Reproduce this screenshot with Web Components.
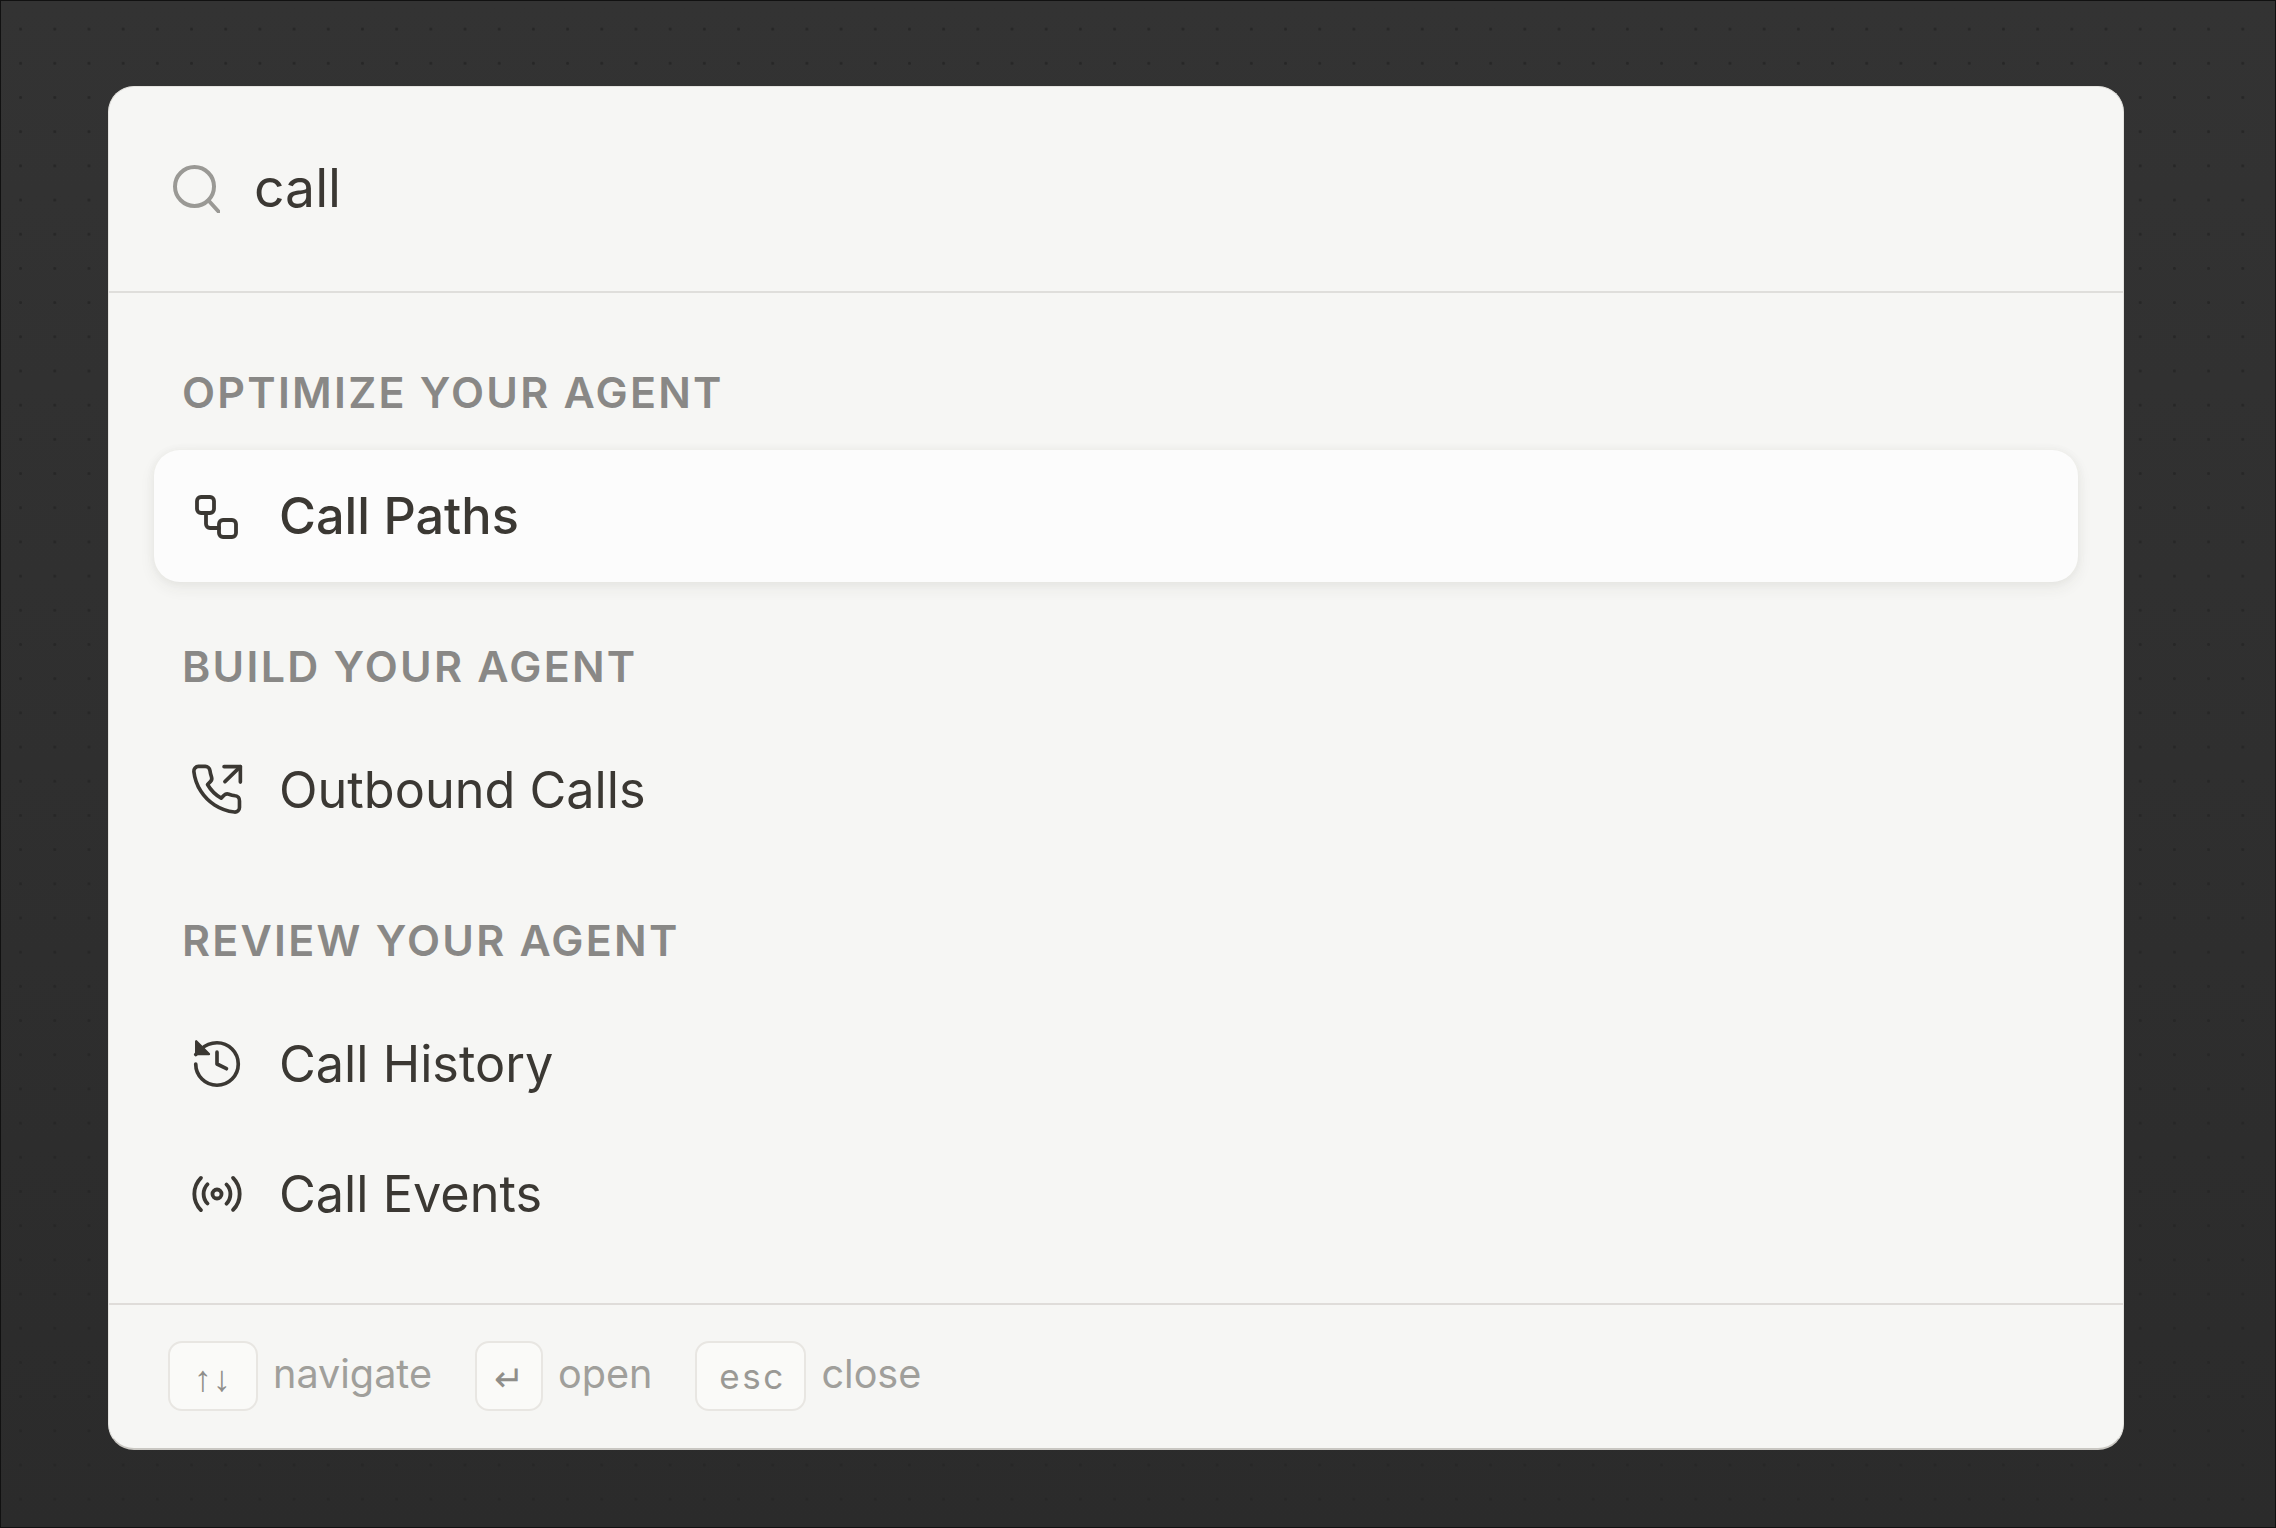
<!DOCTYPE html>
<html lang="en">
<head>
<meta charset="utf-8">
<title>Command palette</title>
<style>
  html, body { margin: 0; padding: 0; background: #2f2f2f; }
</style>
</head>
<body>
<app-backdrop>
  <command-palette>
    <palette-search slot="search" value="call"></palette-search>
    <palette-group label="OPTIMIZE YOUR AGENT">
      <palette-item icon="paths" selected>Call Paths</palette-item>
    </palette-group>
    <palette-group label="BUILD YOUR AGENT">
      <palette-item icon="outbound">Outbound Calls</palette-item>
    </palette-group>
    <palette-group label="REVIEW YOUR AGENT">
      <palette-item icon="history">Call History</palette-item>
      <palette-item icon="events">Call Events</palette-item>
    </palette-group>
    <key-hint slot="footer" keys="↑↓" width="90" small>navigate</key-hint>
    <key-hint slot="footer" keys="↵" width="68" small>open</key-hint>
    <key-hint slot="footer" keys="esc" width="111">close</key-hint>
  </command-palette>
</app-backdrop>

<script>
const FONT = '"Inter", "Liberation Sans", sans-serif';

const ICONS = {
  search: `<svg viewBox="0 0 48 48" width="48" height="48" fill="none" stroke="currentColor" stroke-width="4" stroke-linecap="round"><circle cx="22.5" cy="21.5" r="19.500"/><path d="M36.500 35.500 46.500 46.500"/></svg>`,
  paths: `<svg viewBox="0 0 52 52" width="52" height="52" fill="none" stroke="currentColor" stroke-width="3.800" stroke-linecap="round" stroke-linejoin="round"><rect x="6" y="7" width="17" height="16" rx="4"/><rect x="28" y="30" width="17" height="17" rx="4"/><path d="M15 23v11a4 4 0 0 0 4 4h9"/></svg>`,
  outbound: `<svg viewBox="0.600 0.400 23.600 23.600" width="52" height="52" fill="none" stroke="currentColor" stroke-width="1.650" stroke-linecap="round" stroke-linejoin="round"><path d="M15.600 1.600H23v7"/><path d="M23 1.600 16 8.400"/><path d="M22.600 17.100v3a2.100 2.100 0 0 1-2.300 2.100 20.600 20.600 0 0 1-9-3.200 20.300 20.300 0 0 1-6.200-6.200 20.600 20.600 0 0 1-3.200-9A2.100 2.100 0 0 1 4 1.500h3.100a2.100 2.100 0 0 1 2.100 1.800 13.400 13.400 0 0 0 .7 2.900 2.100 2.100 0 0 1-.5 2.200L8.100 9.700a16.700 16.700 0 0 0 6.200 6.200l1.300-1.300a2.100 2.100 0 0 1 2.200-.5 13.400 13.400 0 0 0 2.900.7 2.100 2.100 0 0 1 1.900 2.300z"/></svg>`,
  history: `<svg viewBox="1 1 22 22" width="52" height="52" fill="none" stroke="currentColor" stroke-width="1.550" stroke-linecap="round" stroke-linejoin="round"><path d="M3 12a9 9 0 1 0 9-9 9.750 9.750 0 0 0-6.740 2.740L3 8"/><path d="M3.200 2.400v5.400h5.400z" fill="currentColor" stroke-width="1"/><path d="M12 7v5l4 2"/></svg>`,
  events: `<svg viewBox="0.500 0.500 23 23" width="52" height="52" fill="none" stroke="currentColor" stroke-width="1.700" stroke-linecap="round" stroke-linejoin="round"><path d="M4.900 19.100C1 15.200 1 8.800 4.900 4.900"/><path d="M7.800 16.200c-2.300-2.300-2.300-6.100 0-8.500"/><circle cx="12" cy="12" r="2"/><path d="M16.200 7.800c2.300 2.300 2.300 6.100 0 8.500"/><path d="M19.100 4.900C23 8.800 23 15.100 19.100 19"/></svg>`
};

class AppBackdrop extends HTMLElement {
  constructor() {
    super();
    this.attachShadow({ mode: 'open' }).innerHTML = `
      <style>
        :host {
          display: flex;
          align-items: flex-start;
          box-sizing: border-box;
          width: 2276px;
          height: 1528px;
          padding: 85px 0 0 107px;
          border: 1px solid #111;
          background-color: #2f2f2f;
          background-image:
            radial-gradient(circle, #272727 1.2px, transparent 1.7px),
            linear-gradient(#333333, #2b2b2b);
          background-size: 34.2px 34.2px, 100% 100%;
          background-position: 2.5px 11px, 0 0;
          font-family: ${FONT};
        }
      </style>
      <slot></slot>
    `;
  }
}

class CommandPalette extends HTMLElement {
  constructor() {
    super();
    this.attachShadow({ mode: 'open' }).innerHTML = `
      <style>
        :host {
          display: flex;
          flex-direction: column;
          box-sizing: border-box;
          width: 2016px;
          background: #f6f6f4;
          border: 1px solid #e4e3df;
          border-bottom: 2px solid #c9c7c2;
          border-radius: 26px;
          overflow: hidden;
        }
        .results {
          display: flex;
          flex-direction: column;
          gap: 58px;
          padding: 72px 45px 44px;
          border-top: 2px solid #dfdedb;
          border-bottom: 2px solid #dfdcd9;
        }
        .footer {
          display: flex;
          gap: 43px;
          padding: 36px 59px 37px;
        }
      </style>
      <slot name="search"></slot>
      <div class="results"><slot></slot></div>
      <div class="footer"><slot name="footer"></slot></div>
    `;
  }
}

class PaletteSearch extends HTMLElement {
  constructor() {
    super();
    this.attachShadow({ mode: 'open' }).innerHTML = `
      <style>
        :host {
          display: flex;
          align-items: center;
          box-sizing: border-box;
          height: 204px;
          padding: 0 0 0 63px;
          gap: 34px;
        }
        .icon { display: flex; color: #9a9995; }
        .value { font-size: 53.500px; font-weight: 400; color: #3b3833; line-height: 1; padding-bottom: 2px; }
      </style>
      <span class="icon">${ICONS.search}</span>
      <span class="value"></span>
    `;
  }

  connectedCallback() {
    this.shadowRoot.querySelector('.value').textContent = this.getAttribute('value');
  }
}

class PaletteGroup extends HTMLElement {
  constructor() {
    super();
    this.attachShadow({ mode: 'open' }).innerHTML = `
      <style>
        :host { display: block; }
        .label {
          padding-left: 28px;
          margin-bottom: 32px;
          font-size: 43px;
          line-height: 54px;
          font-weight: 600;
          letter-spacing: 2.250px;
          color: #898886;
        }
      </style>
      <div class="label"></div>
      <slot></slot>
    `;
  }

  connectedCallback() {
    this.shadowRoot.querySelector('.label').textContent = this.getAttribute('label');
  }
}

class PaletteItem extends HTMLElement {
  constructor() {
    super();
    this.attachShadow({ mode: 'open' }).innerHTML = `
      <style>
        :host {
          display: flex;
          align-items: center;
          gap: 36px;
          height: 130px;
          padding-left: 37px;
          border-radius: 26px;
          font-size: 50.400px;
          font-weight: 420;
          color: #3b3833;
        }
        :host([selected]) {
          height: 132px;
          margin: -1px 0;
          background: #fcfcfc;
          font-weight: 500;
          box-shadow: 0 6px 16px rgba(60, 55, 45, 0.07), 0 0 10px rgba(60, 55, 45, 0.05);
        }
        .icon { display: flex; }
        .text { padding-bottom: 2px; }
      </style>
      <span class="icon"></span>
      <span class="text"><slot></slot></span>
    `;
  }

  connectedCallback() {
    this.shadowRoot.querySelector('.icon').innerHTML = ICONS[this.getAttribute('icon')] || '';
  }
}

class KeyHint extends HTMLElement {
  constructor() {
    super();
    this.attachShadow({ mode: 'open' }).innerHTML = `
      <style>
        :host {
          display: flex;
          align-items: center;
          gap: 15px;
          font-size: 39.600px;
          color: #a09f9b;
        }
        span { padding-bottom: 5px; }
        kbd {
          display: flex;
          align-items: center;
          justify-content: center;
          box-sizing: border-box;
          height: 70px;
          padding-left: 3px;
          background: #fafaf8;
          border: 2px solid #e8e6e2;
          border-radius: 14px;
          font-family: inherit;
          font-size: 35px;
          letter-spacing: 2.500px;
          color: #9a9995;
        }
        :host([small]) kbd {
          font-family: "Liberation Sans", sans-serif;
          font-size: 36px;
          padding: 5px 0 0;
          letter-spacing: 1px;
          color: #8f8e8a;
        }
      </style>
      <kbd></kbd>
      <span><slot></slot></span>
    `;
  }

  connectedCallback() {
    const kbd = this.shadowRoot.querySelector('kbd');
    kbd.textContent = this.getAttribute('keys');
    kbd.style.width = this.getAttribute('width') + 'px';
  }
}

customElements.define('app-backdrop', AppBackdrop);
customElements.define('command-palette', CommandPalette);
customElements.define('palette-search', PaletteSearch);
customElements.define('palette-group', PaletteGroup);
customElements.define('palette-item', PaletteItem);
customElements.define('key-hint', KeyHint);
</script>
</body>
</html>
